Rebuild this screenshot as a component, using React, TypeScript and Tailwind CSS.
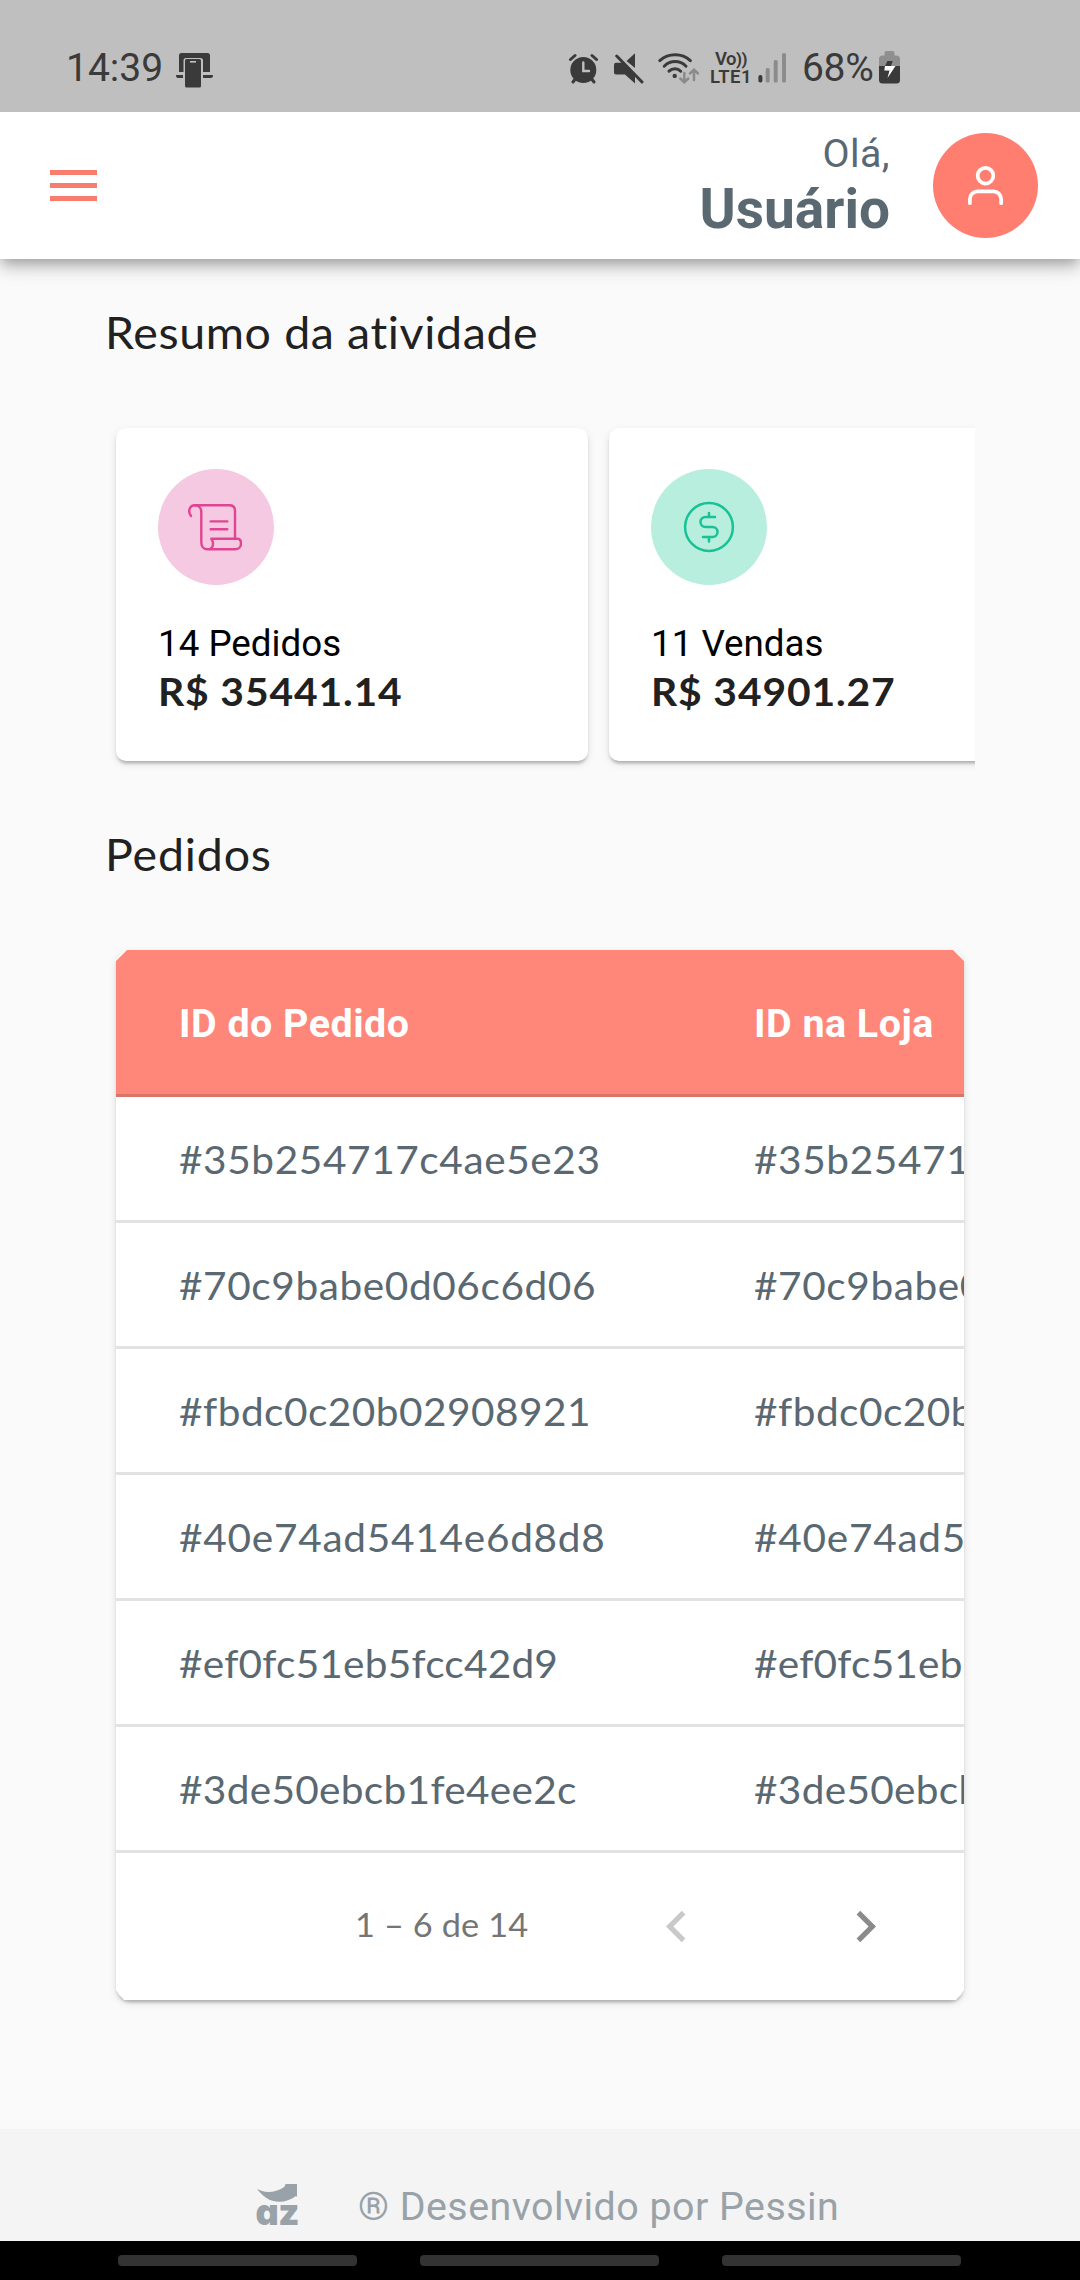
import type { ReactNode } from 'react';

const orders = [
  { id: '#35b254717c4ae5e23', tracking: 'tracking-[0.57px]' },
  { id: '#70c9babe0d06c6d06', tracking: 'tracking-[0.57px]' },
  { id: '#fbdc0c20b02908921', tracking: 'tracking-[0.46px]' },
  { id: '#40e74ad5414e6d8d8', tracking: 'tracking-[0.7px]' },
  { id: '#ef0fc51eb5fcc42d9', tracking: 'tracking-[0.2px]' },
  { id: '#3de50ebcb1fe4ee2c', tracking: 'tracking-[0.3px]' },
];

function StatusBar() {
  return (
    <div className="relative z-20 flex h-[112px] shrink-0 items-center bg-[#bfbfbf] pt-[24px] pl-[66px] text-[#3a3a3a]">
      <span className="w-[110px] text-[39px] leading-[48px]">14:39</span>
      <svg width="37" height="40" viewBox="0 0 37 40" fill="#3a3a3a">
        <path d="M3 24V7.500Q3 5 5.500 5H31.500Q34 5 34 7.500V24H27V12.500Q27 10 24.500 10H10Q7.500 10 7.500 12.500V24Z" />
        <path d="M0 27H7V30H2Q0 30 0 27ZM27 27H37Q37 30 35 30H27Z" />
        <rect x="9" y="11" width="16" height="28.500" rx="1.500" />
        <rect x="14" y="13" width="6" height="1.600" fill="#bfbfbf" />
      </svg>

      <svg className="ml-[356px]" width="29" height="40" viewBox="0 0 29 40" fill="none" strokeLinecap="round">
        <circle cx="14.300" cy="22" r="13" fill="#3a3a3a" />
        <path d="M1.500 11.500L6 7.500M23 7.500L27.500 11.500M7 30L4 34M22 30L25 34" stroke="#3a3a3a" strokeWidth="3" />
        <path d="M14.300 14.500V23H20" stroke="#bfbfbf" strokeWidth="2.400" />
      </svg>
      <svg className="ml-[16px]" width="30" height="40" viewBox="0 0 30 40" fill="#3a3a3a">
        <path d="M21 5.300V20L12.500 13Z" />
        <path d="M2 14.800H8.500L21 27.500V35.500L11 26.500H2Q0 26.500 0 24.500V17Q0 14.800 2 14.800Z" />
        <path d="M2.700 8L28 34" stroke="#3a3a3a" strokeWidth="3" strokeLinecap="round" />
      </svg>
      <svg className="ml-[14px]" width="41" height="40" viewBox="0 0 41 40" fill="none" strokeLinecap="round" strokeWidth="3">
        <g stroke="#3a3a3a">
          <path d="M1.800 12.600C10.500 4.800 24 4.800 32.300 12.600" />
          <path d="M6.200 18.200C12.500 12 21.700 12 28 18.200" />
          <path d="M11 23.200C14.500 19.800 19.500 19.800 22.700 23.200" />
        </g>
        <circle cx="16.700" cy="27.900" r="2.200" fill="#3a3a3a" />
        <path d="M26.300 25V34M22.300 30.500L26.300 34.300L30.300 30.500M36 32V22M32 25.500L36 21.700L40 25.500" stroke="#8a8a8a" strokeWidth="2.500" />
      </svg>
      <div className="ml-[11px] flex w-[42px] flex-col items-center font-semibold">
        <span className="text-[18.5px] leading-[18px] tracking-[-0.5px]">
          Vo<span className="text-[17px] font-bold">))</span>
        </span>
        <span className="text-[18.5px] leading-[18px] tracking-[0.4px]">LTE1</span>
      </div>
      <svg className="ml-[6px]" width="29" height="40" viewBox="0 0 29 40" fill="#8c8c8c">
        <rect x="0.400" y="27" width="4" height="7.500" rx="1.800" fill="#3a3a3a" />
        <rect x="7.700" y="20" width="4" height="14.500" rx="1.500" />
        <rect x="15.700" y="12" width="4" height="22.500" rx="1.500" />
        <rect x="24" y="5" width="4" height="29.500" rx="1.500" />
      </svg>
      <span className="ml-[15px] w-[77px] text-[39px] leading-[48px] tracking-[-0.3px]">68%</span>
      <svg width="21" height="40" viewBox="0 0 21 40">
        <path d="M5.500 7.500V5Q5.500 3 7.500 3H13.500Q15.500 3 15.500 5V7.500H17.500Q21 7.500 21 11V18H0V11Q0 7.500 3.500 7.500Z" fill="#8f8f8f" />
        <path d="M0 18H21V32Q21 35.500 17.500 35.500H3.500Q0 35.500 0 32Z" fill="#3a3a3a" />
        <path d="M8.500 13H13.700L12 18H6Z" fill="#3a3a3a" />
        <path d="M6 18H16.500L8.500 30L10.500 22.500H5.300Z" fill="#ffffff" />
      </svg>
    </div>
  );
}

function Header() {
  return (
    <header className="relative z-10 flex h-[147px] shrink-0 items-center bg-white pr-[42px] pl-[50px] shadow-[0_5px_10px_-3px_rgba(0,0,0,0.2),0_10px_13px_0_rgba(0,0,0,0.14),0_3px_26px_0_rgba(0,0,0,0.12)]">
      <div className="flex w-[47px] flex-col gap-[8px]">
        <span className="h-[5px] bg-[#f87d6f]" />
        <span className="h-[5px] bg-[#f87d6f]" />
        <span className="h-[5px] bg-[#f87d6f]" />
      </div>
      <div className="ml-auto flex flex-col items-end text-[#5a6872]">
        <span className="text-[39.4px] leading-[46px] tracking-[0.4px]">Olá,</span>
        <span className="text-[55px] leading-[64px] font-bold">Usuário</span>
      </div>
      <div className="ml-[43px] flex size-[105px] items-center justify-center rounded-full bg-[#ff7e6f]">
        <svg width="47" height="47" viewBox="0 0 24 24" fill="none" stroke="#ffffff" strokeWidth="1.900" strokeLinecap="round" strokeLinejoin="round">
          <path d="M20 21v-2a4 4 0 0 0-4-4H8a4 4 0 0 0-4 4v2" />
          <circle cx="12" cy="7" r="4" />
        </svg>
      </div>
    </header>
  );
}

function ScrollIcon() {
  return (
    <svg className="mr-[3px]" width="54" height="47" viewBox="0 0 54 47" fill="none" stroke="#e14492" strokeWidth="2.400" strokeLinecap="round" strokeLinejoin="round">
      <path d="M3 12C-0.500 7.500 1.500 1.300 7 1.300C11 1.300 13.300 4.300 13.300 8V38.500C13.300 42.500 16 45.300 19.500 45.300H47C50.500 45.300 53 42.700 53 39.500C53 36.500 51.500 34.800 49.500 34.800H23.300C26.500 39.500 25 45.300 19.500 45.300" />
      <path d="M7 1.300H41.500C45 1.300 47 3.500 47 7V34.800M22.700 17.400H39.300M22.700 25.200H39.300" />
    </svg>
  );
}

function CoinIcon() {
  return (
    <svg width="52" height="52" viewBox="-26 -26 52 52" fill="none" stroke="#18c295" strokeWidth="2.500" strokeLinecap="round">
      <circle cx="0" cy="0" r="23.900" />
      <path d="M6 -10H-3.500A5 5 0 0 0 -3.500 0H3.500A5 5 0 0 1 3.500 10H-6M0 -14V-10M0 10V14.500" />
    </svg>
  );
}

function SummaryCard({ circle, icon, label, value }: { circle: string; icon: ReactNode; label: string; value: string }) {
  return (
    <div className="flex h-[333px] w-[472px] shrink-0 flex-col rounded-[10px] bg-white pt-[41px] pl-[42px] shadow-[0_5px_3px_-3px_rgba(0,0,0,0.14),0_3px_3px_0_rgba(0,0,0,0.1),0_3px_8px_0_rgba(0,0,0,0.1)]">
      <div className={`flex size-[116px] items-center justify-center rounded-full ${circle}`}>{icon}</div>
      <span className="mt-[35px] text-[36.75px] leading-[48px] text-black">{label}</span>
      <span className="origin-left scale-x-[1.06] font-['Lato',sans-serif] text-[38.5px] leading-[47px] font-bold tracking-[0.8px] text-[#212121]">{value}</span>
    </div>
  );
}

function OrdersTable() {
  return (
    <div className="mx-[11px] mt-[66px] rounded-[14px] shadow-[0_5px_3px_-3px_rgba(0,0,0,0.14),0_3px_3px_0_rgba(0,0,0,0.1),0_3px_8px_0_rgba(0,0,0,0.1)]">
      <div className="overflow-hidden bg-white [clip-path:polygon(11px_0,calc(100%_-_11px)_0,100%_11px,100%_calc(100%_-_10px),calc(100%_-_8px)_100%,8px_100%,0_calc(100%_-_10px),0_11px)]">
        <div className="flex h-[147px] items-center border-b-[3px] border-[#d97468] bg-[#ff877a] pt-[3px] pl-[63px] text-[39.4px] leading-[48px] font-bold tracking-[0.5px] whitespace-nowrap text-white">
          <span className="w-[575px] shrink-0">ID do Pedido</span>
          <span className="w-[400px] shrink-0">ID na Loja</span>
        </div>
        {orders.map(({ id, tracking }) => (
          <div
            key={id}
            className={`flex h-[126px] items-center border-b-[3px] border-[#e2e2e2] pl-[63px] font-['Lato',sans-serif] text-[39px] leading-[48px] whitespace-nowrap text-[#5a6872] ${tracking}`}
          >
            <span className="w-[575px] shrink-0 origin-left scale-x-[1.04]">{id}</span>
            <span className="w-[450px] shrink-0 origin-left scale-x-[1.04]">{id}</span>
          </div>
        ))}
        <div className="flex h-[147px] items-center pl-[239px]">
          <span className="w-[290px] origin-left scale-x-[1.04] pb-[5px] font-['Lato',sans-serif] text-[33px] leading-[48px] tracking-[0.1px] text-[#757575]">1 – 6 de 14</span>
          <svg width="63" height="63" viewBox="0 0 24 24" fill="#c9c9c9">
            <path d="M15.410 7.410L14 6l-6 6 6 6 1.410-1.410L10.830 12z" />
          </svg>
          <svg className="ml-[126px]" width="63" height="63" viewBox="0 0 24 24" fill="#8a8a8a">
            <path d="M10 6L8.590 7.410 13.170 12l-4.580 4.590L10 18l6-6z" />
          </svg>
        </div>
      </div>
    </div>
  );
}

function Footer() {
  return (
    <footer className="flex h-[112px] shrink-0 items-start bg-[#f4f4f4] pt-[54px] pl-[257px] text-[#98a2a8]">
      <svg className="mt-[1px] overflow-visible" width="40" height="41" viewBox="0 0 40 41" fill="#98a2a8">
        <path d="M0 4.800C6 8.800 17 10 27.500 2.800L28.500 0H40V13L39 12C30 19 17.500 19.500 9.500 14C5 11 2 7.500 0 4.800Z" />
        <text x="-1.500" y="40.500" fontSize="36" fontWeight="900" letterSpacing="-0.5" className="font-['Inter',sans-serif] [font-feature-settings:'cv11']">
          az
        </text>
      </svg>
      <span className="ml-[61px] text-[39.4px] leading-[48px] tracking-[0.47px]">® Desenvolvido por Pessin</span>
    </footer>
  );
}

export default function App() {
  return (
    <div className="flex h-[2280px] w-[1080px] flex-col overflow-hidden bg-[#fafafa] font-['Roboto',sans-serif]">
      <StatusBar />
      <Header />
      <main className="flex-1 px-[105px] pt-[43px]">
        <h1 className="origin-left scale-x-[1.045] font-['Lato',sans-serif] text-[44.5px] leading-[60px] tracking-[0.6px] text-[#212121]">Resumo da atividade</h1>
        <div className="mt-[55px] flex gap-[21px] overflow-hidden p-[11px]">
          <SummaryCard circle="bg-[#f4c9e1]" icon={<ScrollIcon />} label="14 Pedidos" value="R$ 35441.14" />
          <SummaryCard circle="bg-[#b7eedd]" icon={<CoinIcon />} label="11 Vendas" value="R$ 34901.27" />
        </div>
        <h2 className="mt-[52px] origin-left scale-x-[1.045] font-['Lato',sans-serif] text-[44.5px] leading-[60px] tracking-[0.8px] text-[#212121]">Pedidos</h2>
        <OrdersTable />
      </main>
      <Footer />
      <nav className="flex h-[39px] shrink-0 items-start gap-[63px] bg-black pt-[14px] pl-[118px]">
        <span className="h-[11px] w-[239px] rounded-[4px] bg-[#333333]" />
        <span className="h-[11px] w-[239px] rounded-[4px] bg-[#333333]" />
        <span className="h-[11px] w-[239px] rounded-[4px] bg-[#333333]" />
      </nav>
    </div>
  );
}
